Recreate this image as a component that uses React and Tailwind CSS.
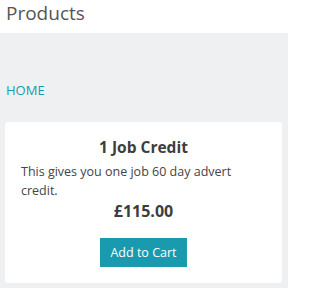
export default function App() {
  return (
    <div className="w-[288px] h-[288px] overflow-hidden bg-[#eff0f2] font-['Open_Sans',sans-serif] text-[#444]">
      <div className="h-[33px] bg-white px-[6px]">
        <h1 className="text-[19px] leading-[26px] text-[#555]">Products</h1>
      </div>
      <div className="px-[5px]">
        <div className="pt-[48px] pb-[23px] px-px text-[13px] leading-[18px]">
          <a className="text-[#1a9bb0]">HOME</a>
        </div>
        <div className="bg-white rounded-[3px] px-4 pt-[14px] pb-4 w-[277px]">
          <h2 className="text-center font-bold text-[15.5px] leading-[22px] text-[#3d3d3d]">1 Job Credit</h2>
          <p className="text-[12.5px] leading-[19px] mt-[4px] pr-[12px] text-[#444]">
            This gives you one job 60 day advert credit.
          </p>
          <p className="text-center font-bold text-[16px] leading-[22px] text-[#3d3d3d]">£115.00</p>
          <div className="flex justify-center mt-[16px]">
            <button className="bg-[#1a9aae] text-white text-[12.5px] leading-[19px] px-[10px] py-[5px]">
              Add to Cart
            </button>
          </div>
        </div>
      </div>
    </div>
  );
}
